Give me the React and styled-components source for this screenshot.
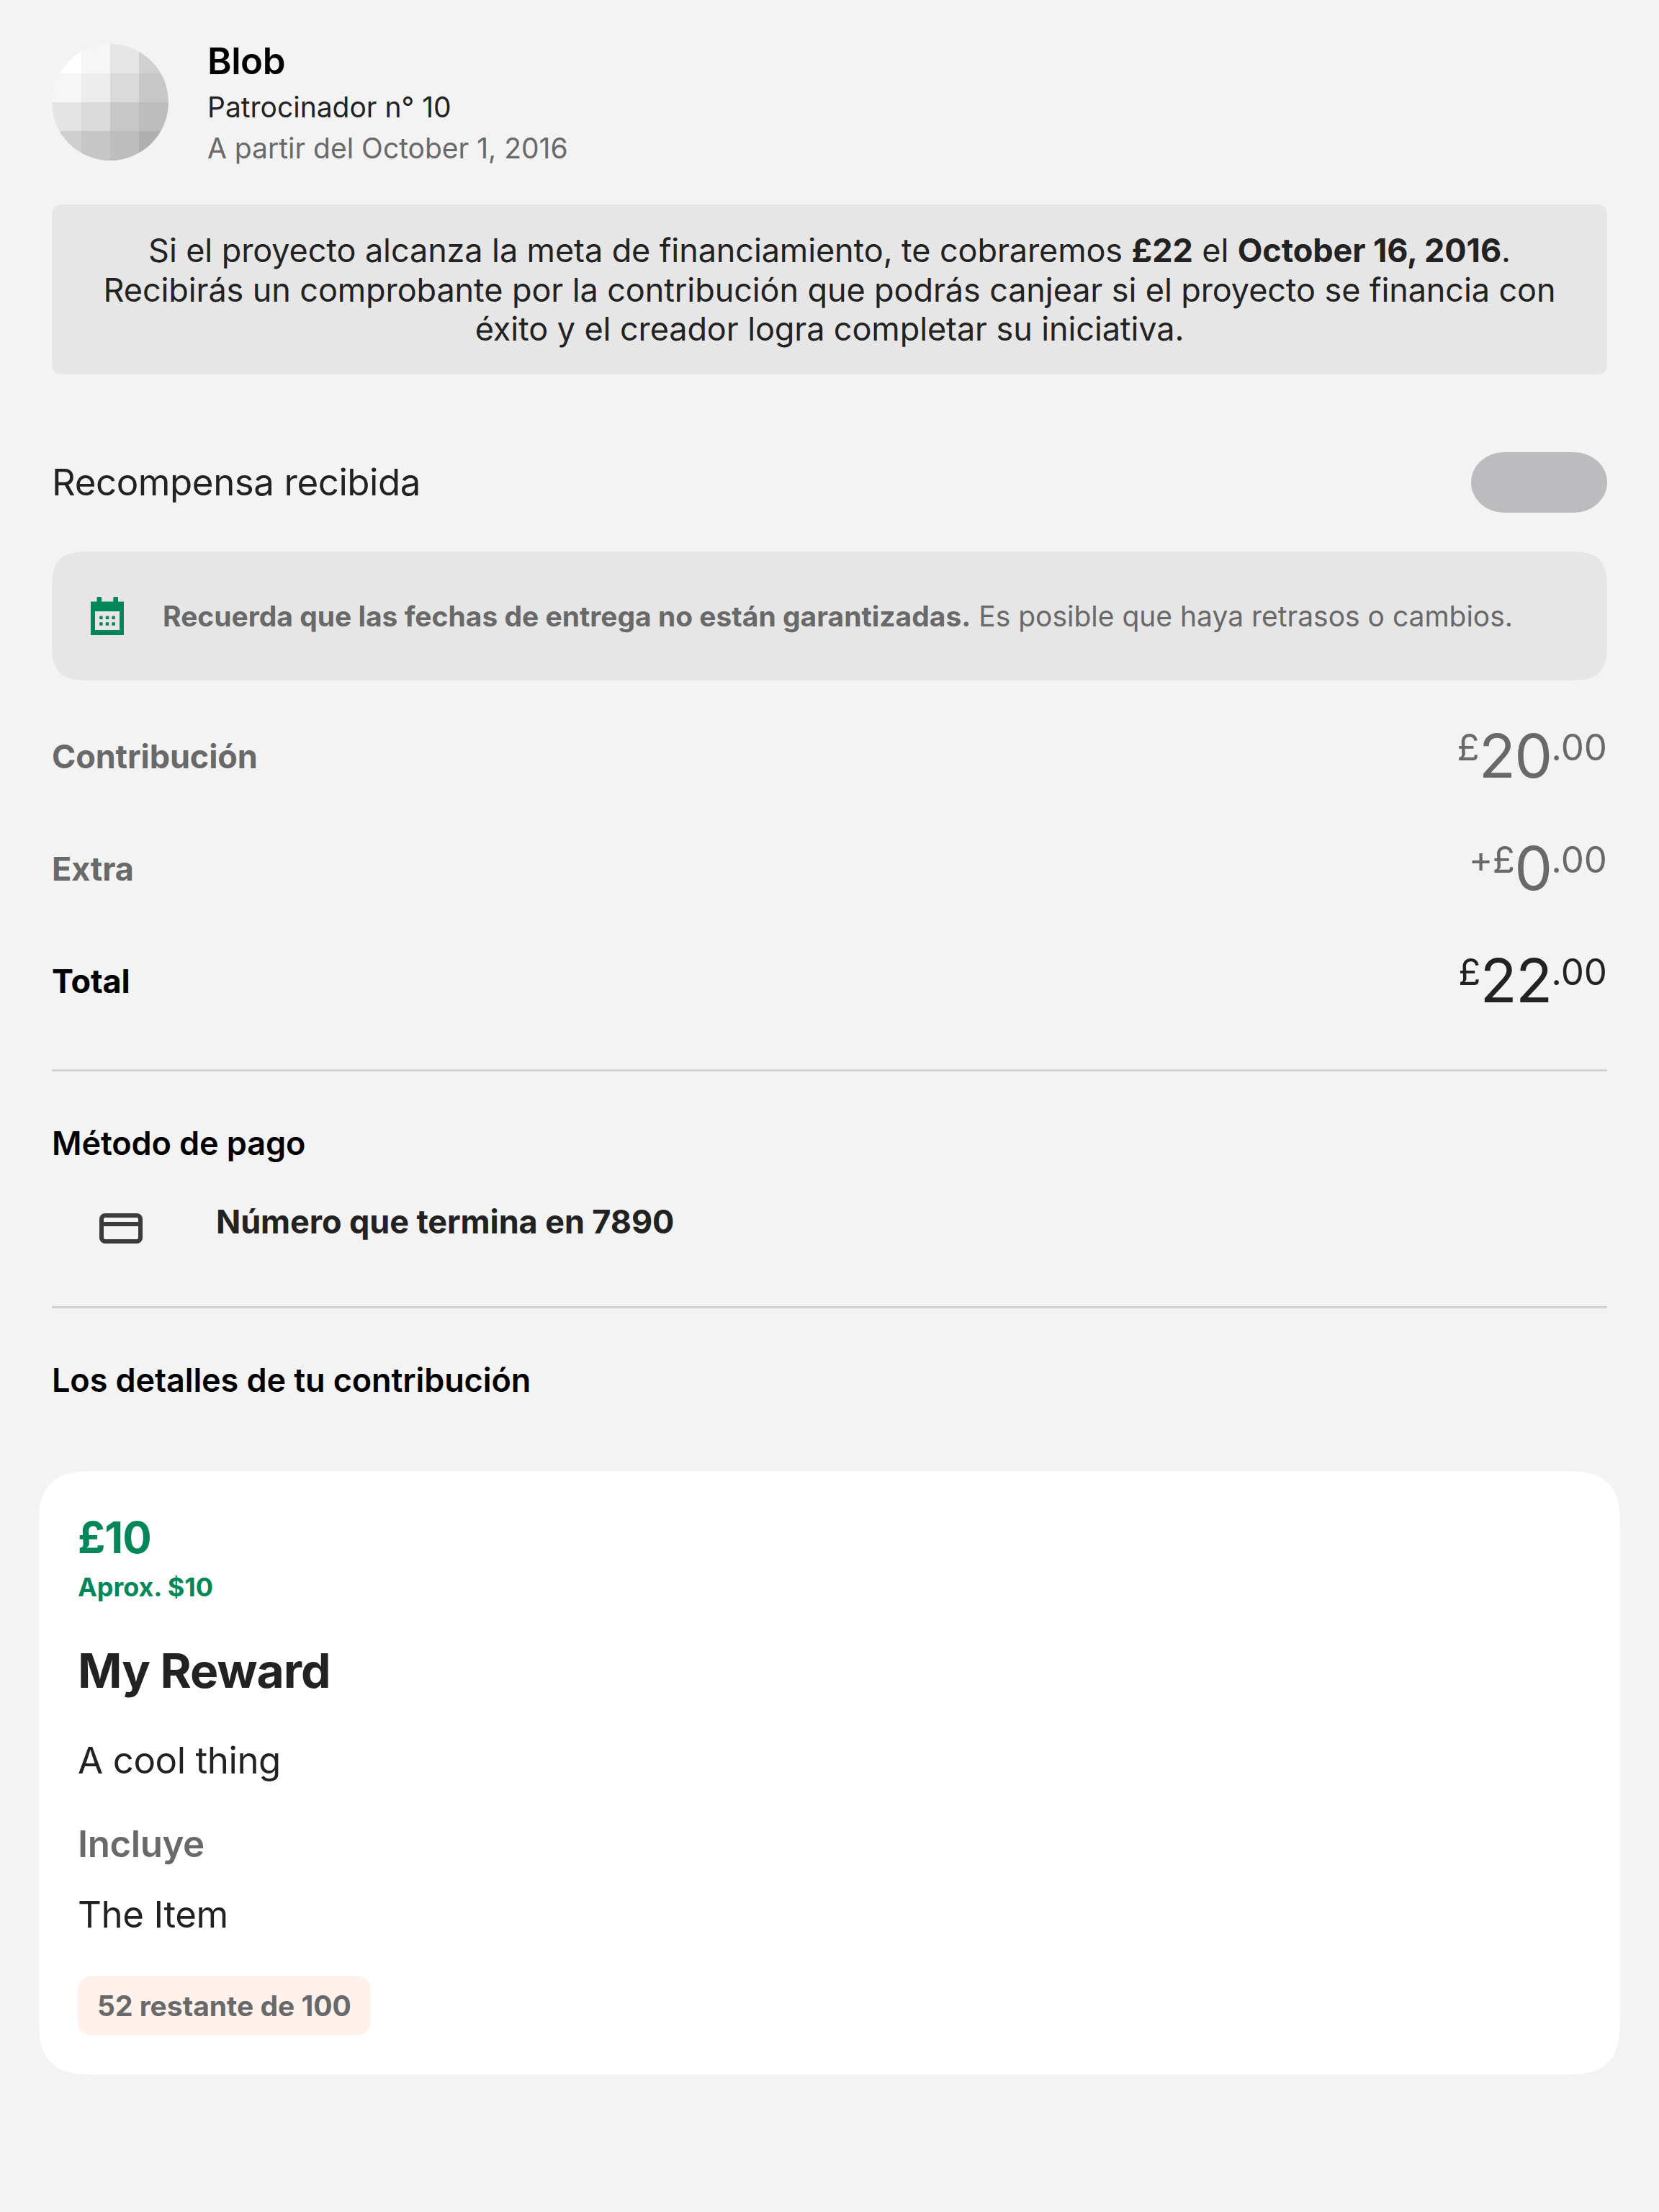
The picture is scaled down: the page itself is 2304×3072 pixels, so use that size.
import React from "react";
import styled, { createGlobalStyle, css } from "styled-components";

const color = {
  page: "#f3f3f3",
  panel: "#e6e6e6",
  ink: "#222222",
  muted: "#696969",
  green: "#028858",
  rule: "#d1d1d1",
};

/* Rounded corners with a continuous curvature where the browser can draw them. */
const smoothCorners = (radius) => css`
  border-radius: ${radius}px;
  @supports (corner-shape: squircle) {
    border-radius: ${radius * 1.5}px;
    corner-shape: superellipse(1.6);
  }
`;

const GlobalStyle = createGlobalStyle`
  * { box-sizing: border-box; }
  body {
    margin: 0;
    background: ${color.page};
    font-family: Inter, "Liberation Sans", sans-serif;
    color: ${color.ink};
  }
`;

const Page = styled.main`
  width: 2304px;
  height: 3072px;
  padding: 54px 54px 0;
  background: ${color.page};
  display: flex;
  flex-direction: column;
`;

const Content = styled.div`
  padding: 0 18px;
  display: flex;
  flex-direction: column;
`;

const tracking = { 36: -0.05, 39: -0.01, 45: -0.1, 51: -0.43, 60: -0.95, 66: -1 };

const Text = styled.div`
  font-size: ${(p) => p.$size}px;
  line-height: ${(p) => p.$line}px;
  font-weight: ${(p) => p.$weight || 400};
  color: ${(p) => p.$color || color.ink};
  letter-spacing: ${(p) => tracking[p.$size]}px;
  white-space: nowrap;
`;

const Header = styled.header`
  display: flex;
  align-items: center;
  gap: 54px;
  height: 176px;
`;

const Avatar = styled.svg`
  width: 162px;
  height: 162px;
  border-radius: 50%;
  flex: none;
`;

const BackerInfo = styled.div`
  display: flex;
  flex-direction: column;
  gap: 9px;
`;

const Notice = styled.p`
  margin: 54px 0 0;
  height: 236px;
  padding: 37px 54px 0;
  ${smoothCorners(12)}
  background: ${color.panel};
  font-size: 45px;
  line-height: 54.5px;
  letter-spacing: -0.1px;
  text-align: center;
`;

const ReceivedRow = styled.div`
  margin-top: 108px;
  height: 84px;
  display: flex;
  align-items: center;
  justify-content: space-between;
`;

const Toggle = styled.div`
  width: 189px;
  height: 84px;
  border-radius: 46px / 42px;
  background: #bcbcbe;
`;

const Reminder = styled.div`
  margin-top: 54px;
  height: 179px;
  padding-left: 54px;
  display: flex;
  align-items: center;
  gap: 54px;
  ${smoothCorners(36)}
  background: ${color.panel};
`;

const CalendarIcon = styled.svg`
  width: 46px;
  height: 53px;
  flex: none;
`;

const Amounts = styled.div`
  margin-top: 54px;
  display: flex;
  flex-direction: column;
  gap: 54px;
`;

const AmountRow = styled.div`
  height: 102px;
  display: flex;
  align-items: flex-start;
  justify-content: space-between;
  color: ${(p) => p.$color};
`;

const AmountLabel = styled.div`
  padding-top: 25px;
`;

const Amount = styled.div`
  display: flex;
  align-items: flex-start;
  height: 102px;
  font-size: 51px;
  line-height: 62px;
`;

const Small = styled.span`
  padding-top: 8px;
  letter-spacing: ${(p) => p.$track}px;
`;

const Whole = styled.span`
  font-size: 84px;
  line-height: 102px;
  letter-spacing: -1.9px;
`;

const Rule = styled.hr`
  width: 100%;
  height: 3px;
  margin: ${(p) => p.$top}px 0 0;
  border: 0;
  background: ${color.rule};
`;

const Section = styled.section`
  margin-top: 73px;
  display: flex;
  flex-direction: column;
`;

const CardRow = styled.div`
  margin-top: 54px;
  padding-left: 66px;
  display: flex;
  align-items: flex-start;
  gap: 102px;
`;

const CreditCardIcon = styled.svg`
  width: 60px;
  height: 42px;
  margin-top: 16px;
  flex: none;
`;

const RewardCard = styled.article`
  margin-top: 99px;
  height: 838px;
  padding: 56px 54px 0;
  ${smoothCorners(54)}
  background: #ffffff;
  display: flex;
  flex-direction: column;
  align-items: flex-start;
`;

const Stack = styled.div`
  margin-top: ${(p) => p.$top}px;
`;

const Badge = styled.div`
  margin-top: 54px;
  height: 83px;
  padding: 18px 27px;
  ${smoothCorners(18)}
  background: #fff2ec;
`;

const tileRows = [
  ["#ffffff", "#f6f6f6", "#e5e5e5", "#d0d0d0"],
  ["#f6f6f6", "#ececec", "#dadada", "#c7c7c7"],
  ["#e4e4e4", "#dadada", "#c7c7c7", "#bdbdbd"],
  ["#cfcfcf", "#c6c6c6", "#bdbdbd", "#b0b0b0"],
];
const tileEdges = [0, 41, 81, 121, 162];

const amountRows = [
  { label: "Contribución", sign: "£", whole: "20", tone: color.muted, labelTone: color.muted },
  { label: "Extra", sign: "+£", whole: "0", tone: color.muted, labelTone: color.muted },
  { label: "Total", sign: "£", whole: "22", tone: color.ink, labelTone: "#000" },
];

export default function App() {
  return (
    <Page>
      <GlobalStyle />
      <Content>
        <Header>
          <Avatar viewBox="0 0 162 162">
            {tileRows.map((row, y) =>
              row.map((fill, x) => (
                <rect
                  key={`${x}-${y}`}
                  x={tileEdges[x]}
                  y={tileEdges[y]}
                  width={tileEdges[x + 1] - tileEdges[x]}
                  height={tileEdges[y + 1] - tileEdges[y]}
                  fill={fill}
                />
              ))
            )}
          </Avatar>
          <BackerInfo>
            <Text $size={51} $line={62} $weight={600} $color="#000">Blob</Text>
            <Text $size={39} $line={48}>Patrocinador n° 10</Text>
            <Text $size={39} $line={48} $color={color.muted}>A partir del October 1, 2016</Text>
          </BackerInfo>
        </Header>

        <Notice>
          Si el proyecto alcanza la meta de financiamiento, te cobraremos <b>£22</b> el{" "}
          <b>October 16, 2016</b>. Recibirás un comprobante por la contribución que podrás canjear
          si el proyecto se financia con éxito y el creador logra completar su iniciativa.
        </Notice>

        <ReceivedRow>
          <Text $size={51} $line={62}>Recompensa recibida</Text>
          <Toggle />
        </ReceivedRow>

        <Reminder>
          <CalendarIcon viewBox="0 0 46 53" fill={color.green}>
            <path
              fillRule="evenodd"
              d="M0 6.500H8.500V1Q8.500 0 9.500 0H14Q15 0 15 1V6.500H31.300V1Q31.300 0 32.300 0H37Q38 0 38 1V6.500H46V53H0ZM6 20V46H40V20Z"
            />
            <path d="M12.200 26.500h4.400v4.400h-4.400zM20.800 26.500h4.400v4.400h-4.400zM29.400 26.500h4.400v4.400h-4.400zM12.200 35.300h4.400v4.400h-4.400zM20.800 35.300h4.400v4.400h-4.400zM29.400 35.300h4.400v4.400h-4.400z" />
          </CalendarIcon>
          <Text $size={39} $line={48} $color={color.muted}>
            <b>Recuerda que las fechas de entrega no están garantizadas.</b> Es posible que haya
            retrasos o cambios.
          </Text>
        </Reminder>

        <Amounts>
          {amountRows.map((row) => (
            <AmountRow key={row.label} $color={row.tone}>
              <AmountLabel>
                <Text $size={45} $line={54} $weight={700} $color={row.labelTone}>{row.label}</Text>
              </AmountLabel>
              <Amount>
                <Small $track={-0.8}>{row.sign}</Small>
                <Whole>{row.whole}</Whole>
                <Small $track={0}>.00</Small>
              </Amount>
            </AmountRow>
          ))}
        </Amounts>

        <Rule $top={72} />

        <Section>
          <Text $size={45} $line={54} $weight={600} $color="#000">Método de pago</Text>
          <CardRow>
            <CreditCardIcon viewBox="0 0 60 42" fill="none" stroke="#3c3c3c" strokeWidth="6">
              <rect x="3" y="3" width="54" height="36" rx="5" />
              <path d="M3 15H57" />
            </CreditCardIcon>
            <Text $size={45} $line={55} $weight={700}>Número que termina en 7890</Text>
          </CardRow>
        </Section>

        <Rule $top={87} />

        <Section>
          <Text $size={45} $line={54} $weight={600} $color="#000">
            Los detalles de tu contribución
          </Text>
        </Section>
      </Content>

      <RewardCard>
        <Text $size={60} $line={72} $weight={700} $color={color.green}>£10</Text>
        <Stack $top={11}>
          <Text $size={36} $line={44} $weight={700} $color={color.green}>Aprox. $10</Text>
        </Stack>
        <Stack $top={54}>
          <Text $size={66} $line={80} $weight={700}>My Reward</Text>
        </Stack>
        <Stack $top={54}>
          <Text $size={51} $line={62}>A cool thing</Text>
        </Stack>
        <Stack $top={54}>
          <Text $size={51} $line={62} $weight={600} $color={color.muted}>Incluye</Text>
        </Stack>
        <Stack $top={36}>
          <Text $size={51} $line={62}>The Item</Text>
        </Stack>
        <Badge>
          <Text $size={39} $line={47} $weight={700} $color={color.muted}>52 restante de 100</Text>
        </Badge>
      </RewardCard>
    </Page>
  );
}
